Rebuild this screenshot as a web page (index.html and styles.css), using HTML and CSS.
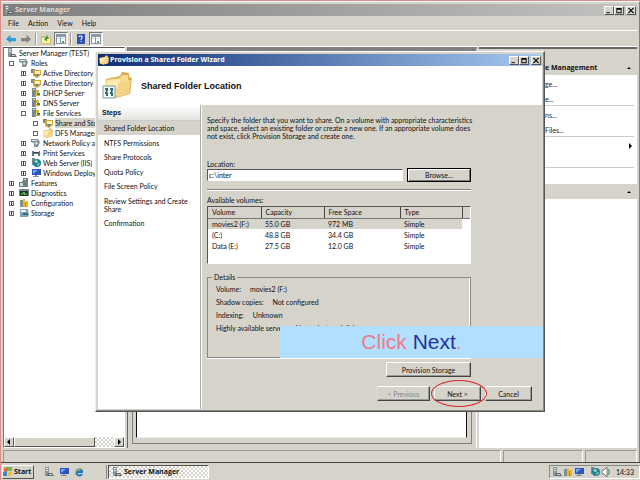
FILE: index.html
```html
<!DOCTYPE html>
<html lang="en">
<head>
<meta charset="utf-8">
<title>Server Manager</title>
<link rel="stylesheet" href="styles.css">
</head>
<body>
<svg class="defs" aria-hidden="true">
  <symbol id="server" viewBox="0 0 10 10"><path fill="#8b989b" d="M1 0h4v9H1z"/><path fill="#dfe7e5" d="M2 1h2v1H2zM2 3h2v1H2z"/><path fill="#59666b" d="M4 6h4l2 3H3z"/><path fill="#cfd7d8" d="M5 7h3v1H5z"/></symbol>
  <symbol id="folder" viewBox="0 0 28 28"><path fill="#d8ab4e" d="M2 8l14-3 2-4 7 1v4l3 1-2 16-14 4L2 24z"/><path fill="#f8dc8c" d="M1 9l15-2 2-3h6l1 18-12 4L3 24z"/><path fill="#ffeab0" d="M3 10l13-2 1 8L4 20z"/><path fill="#f3d486" d="M14 12l13-3-2 14-12 3z"/></symbol>
  <symbol id="roles" viewBox="0 0 10 10"><path fill="#829296" d="M0 1h7l2 3-2 5H3V5L0 4z"/><path fill="#e1eaea" d="M1 2h5v1H1zM5 4l2 1-2 2-1-2z"/></symbol>
  <symbol id="dir" viewBox="0 0 10 10"><path fill="#79878c" d="M0 1h4v4H0z"/><path fill="#d4a62e" d="M2 2h8v5L6 10 2 8z"/><path fill="#fff4bd" d="M4 3h5v3H4z"/><path fill="#5c82a6" d="M4 6h4l-2 3z"/></symbol>
  <symbol id="net" viewBox="0 0 10 10"><path fill="#78868b" d="M1 0h4v9H1z"/><path fill="#dbe4e5" d="M2 1h2v1H2z"/><path fill="#d5b52e" d="M5 2h3v3H5zM4 6h5v2H4z"/><path fill="#388365" d="M6 5h3v2H6z"/></symbol>
  <symbol id="print" viewBox="0 0 10 10"><path fill="#66757b" d="M1 3h8v5H1z"/><path fill="#f4f7f8" d="M3 0h5v4H3zM3 6h4v3H3z"/><path fill="#334b58" d="M2 4h6v1H2z"/></symbol>
  <symbol id="web" viewBox="0 0 10 10"><path fill="#77868a" d="M1 0h3v7H1z"/><circle cx="6" cy="5" r="4" fill="#1c8495"/><path fill="#a5e0c0" d="M3 3l3-1 1 2-2 1zM6 6l3-1-2 3z"/></symbol>
  <symbol id="pc" viewBox="0 0 10 10"><path fill="#3053bb" d="M1 1h9v6H1z"/><path fill="#6caaf1" d="M2 2h5L2 6z"/><path fill="#84949b" d="M4 7h2v1h2v1H2V8h2z"/></symbol>
  <symbol id="feat" viewBox="0 0 10 10"><path fill="#6d8084" d="M4 0h5v9H3V3h1zM0 4h5v5H0z"/><path fill="#d3dcdd" d="M5 1h2v1H5zM1 5h3v3H1z"/></symbol>
  <symbol id="diag" viewBox="0 0 10 10"><path fill="#7c898b" d="M0 1h10v7H0z"/><path fill="#1c3829" d="M1 3h8v5H1z"/><path d="M2 6h2l1-2 1 3 1-1h1" fill="none" stroke="#77df5b"/></symbol>
  <symbol id="config" viewBox="0 0 10 10"><path fill="#809096" d="M1 2h3v7H1zM4 4h5v5H4z"/><path fill="#f0b61b" d="M4 1h2v8H4zM7 3h2v6H7z"/></symbol>
  <symbol id="disk" viewBox="0 0 10 10"><path fill="#87a1ac" d="M1 1h8l1 7-2 1H1z"/><path fill="#eef6f7" d="M2 2h5v2H2z"/><path fill="#187995" d="M4 5h5v2H4z"/></symbol>
  <symbol id="arrow" viewBox="0 0 11 10"><path d="M1 5l4-4v3h5v3H5v2z"/></symbol>
  <symbol id="panel" viewBox="0 0 12 12"><path fill="#8a98a8" d="M1 1h10v10H1z"/><path fill="#fff" d="M2 4h3v6H2zM6 4h4v6H6z"/><path fill="#bac8d8" d="M2 5h2v1H2zM7 5h2v1H7z"/><path fill="#55a34a" d="M7 8h2v2H7z"/></symbol>
  <symbol id="up" viewBox="0 0 6 6"><path d="M1 4l2-2 2 2z"/></symbol>
  <symbol id="right" viewBox="0 0 6 6"><path d="M2 0l3 3-3 3z"/></symbol>
  <symbol id="left" viewBox="0 0 6 6"><path d="M4 0L1 3l3 3z"/></symbol>
  <symbol id="min" viewBox="0 0 8 8"><path d="M1 6h4v1H1z"/></symbol>
  <symbol id="max" viewBox="0 0 8 8"><path d="M1 1h6v6H1V1zm1 2v3h4V3z" fill-rule="evenodd"/></symbol>
  <symbol id="close" viewBox="0 0 8 8"><path d="M1 1l6 6M7 1L1 7" stroke="#000" stroke-width="1.3"/></symbol>
  <symbol id="ie" viewBox="0 0 10 10"><path d="M8 7A3 3 0 1 1 8 4L8 5H3" fill="none" stroke="#1877c9" stroke-width="2"/><path d="M1 8C0 5 7 0 9 2" fill="none" stroke="#e6b93b"/></symbol>
</svg>
<main class="screen">
  <section class="manager">
    <header class="titlebar"><svg class="ic"><use href="#server"/></svg><h1>Server Manager</h1>
      <div class="winbtns"><button aria-label="Minimize"><svg><use href="#min"/></svg></button><button aria-label="Maximize"><svg><use href="#max"/></svg></button><button class="cls" aria-label="Close"><svg><use href="#close"/></svg></button></div>
    </header>
    <nav class="menu"><button>File</button><button>Action</button><button>View</button><button>Help</button></nav>
    <div class="toolbar">
      <button aria-label="Back"><svg fill="#2b9bd3"><use href="#arrow"/></svg></button>
      <button class="fwd" aria-label="Forward"><svg fill="#858585"><use href="#arrow"/></svg></button>
      <i class="sep"></i>
      <button aria-label="Up"><svg viewBox="0 0 12 12"><path fill="#d9c05c" d="M1 3h3l1 1h6v7H1z"/><path fill="#fff6aa" d="M2 5h8v5H2z"/><path fill="#3f9c3c" d="M4 7l3-5 2 4H7v2z"/></svg></button>
      <button class="on" aria-label="Console tree"><svg><use href="#panel"/></svg></button>
      <i class="sep"></i>
      <button aria-label="Help"><svg viewBox="0 0 12 12"><path fill="#3350ae" d="M2 1h8v10H2z"/><path fill="none" stroke="#fff" d="M4 4V3h3v2L6 6v1M6 8v1"/></svg></button>
      <button class="on" aria-label="Action pane"><svg><use href="#panel"/></svg></button>
    </div>
    <div class="work">
      <aside class="treepane">
        <ul class="tree">
          <li><svg class="ic"><use href="#server"/></svg>Server Manager (TEST)</li>
          <li class="l1"><b class="ex minus"></b><svg class="ic"><use href="#roles"/></svg>Roles</li>
          <li class="l2"><b class="ex"></b><svg class="ic"><use href="#dir"/></svg>Active Directory C</li>
          <li class="l2"><b class="ex"></b><svg class="ic"><use href="#dir"/></svg>Active Directory D</li>
          <li class="l2"><b class="ex"></b><svg class="ic"><use href="#net"/></svg>DHCP Server</li>
          <li class="l2"><b class="ex"></b><svg class="ic"><use href="#net"/></svg>DNS Server</li>
          <li class="l2"><b class="ex minus"></b><svg class="ic"><use href="#net"/></svg>File Services</li>
          <li class="l3"><b class="ex minus"></b><svg class="ic"><use href="#dir"/></svg><span class="sel">Share and Sto</span></li>
          <li class="l3"><b class="ex minus"></b><svg class="ic"><use href="#folder"/></svg>DFS Managem</li>
          <li class="l2"><b class="ex"></b><svg class="ic"><use href="#roles"/></svg>Network Policy an</li>
          <li class="l2"><b class="ex"></b><svg class="ic"><use href="#print"/></svg>Print Services</li>
          <li class="l2"><b class="ex"></b><svg class="ic"><use href="#web"/></svg>Web Server (IIS)</li>
          <li class="l2"><b class="ex"></b><svg class="ic"><use href="#pc"/></svg>Windows Deploym</li>
          <li class="l1"><b class="ex"></b><svg class="ic"><use href="#feat"/></svg>Features</li>
          <li class="l1"><b class="ex"></b><svg class="ic"><use href="#diag"/></svg>Diagnostics</li>
          <li class="l1"><b class="ex"></b><svg class="ic"><use href="#config"/></svg>Configuration</li>
          <li class="l1"><b class="ex"></b><svg class="ic"><use href="#disk"/></svg>Storage</li>
        </ul>
        <div class="hscroll"><button aria-label="Scroll left"><svg><use href="#left"/></svg></button><i class="thumb"></i><i class="track"></i><button aria-label="Scroll right"><svg><use href="#right"/></svg></button></div>
      </aside>
      <section class="center"><div class="frame"><div class="sheet"></div></div></section>
      <aside class="actions">
        <h2>e Management<svg><use href="#up"/></svg></h2>
        <div class="group"><a href="#">ge...</a><a href="#">e...</a></div>
        <div class="group"><a href="#">ns...</a><a href="#">Files...</a></div>
        <div class="group"><a href="#"><svg><use href="#right"/></svg></a><a href="#"></a></div>
        <div class="group last"></div>
        <h2><svg><use href="#up"/></svg></h2>
      </aside>
    </div>
    <footer class="status"><i></i><i></i><i></i></footer>
  </section>
  <footer class="taskbar">
    <button class="start"><svg viewBox="0 0 10 10"><path fill="#e56b38" d="M1 1l4-1v4L1 5z"/><path fill="#79b94b" d="M5 0h4v4H5z"/><path fill="#4585c8" d="M0 5l4-1v5H0z"/><path fill="#edc23d" d="M5 5h4L8 9H5z"/></svg>Start</button>
    <div class="quick"><svg><use href="#server"/></svg><svg><use href="#pc"/></svg><svg><use href="#ie"/></svg></div>
    <button class="task"><svg><use href="#server"/></svg>Server Manager</button>
    <div class="tray"><svg><use href="#server"/></svg><svg><use href="#config"/></svg><svg><use href="#pc"/></svg><svg class="far"><use href="#web"/></svg><svg viewBox="0 0 10 10"><path fill="#fff" stroke="#777" d="M1 3h2l3-3v10L3 7H1z"/><path fill="none" stroke="#218c6b" d="M7 2q3 3 0 6"/></svg><time>14:33</time></div>
  </footer>

  <section class="dialog" role="dialog" aria-labelledby="dt">
    <header class="titlebar blue"><svg class="ic"><use href="#folder"/></svg><h1 id="dt">Provision a Shared Folder Wizard</h1>
      <div class="winbtns"><button aria-label="Minimize"><svg><use href="#min"/></svg></button><button aria-label="Maximize"><svg><use href="#max"/></svg></button><button class="cls" aria-label="Close"><svg><use href="#close"/></svg></button></div>
    </header>
    <div class="banner"><svg viewBox="0 0 30 30"><use href="#folder" width="28" height="28" x="2"/><path fill="#eef6f5" stroke="#769d9b" d="M1 15h12v12H1z"/><path fill="#34676b" d="M3 17h3v3H5l1 2v3H4v-2H3v-2h1zM8 17h3v3h-1l1 2v3H9v-2H8v-2h1z"/></svg><h2>Shared Folder Location</h2></div>
    <div class="dbody">
      <nav class="steps"><h3>Steps</h3>
        <ol><li class="cur">Shared Folder Location</li><li>NTFS Permissions</li><li>Share Protocols</li><li>Quota Policy</li><li>File Screen Policy</li><li>Review Settings and Create Share</li><li>Confirmation</li></ol>
      </nav>
      <form class="content">
        <p class="intro">Specify the folder that you want to share. On a volume with appropriate characteristics<br>and space, select an existing folder or create a new one. If an appropriate volume does<br>not exist, click Provision Storage and create one.</p>
        <label for="loc">Location:</label>
        <div class="locrow"><input id="loc" type="text" value="c:\inter"><button type="button" class="btn default">Browse...</button></div>
        <hr>
        <div class="avail">Available volumes:</div>
        <div class="list"><table>
          <colgroup><col class="c1"><col class="c2"><col class="c3"><col class="c4"><col></colgroup>
          <thead><tr><th>Volume</th><th>Capacity</th><th>Free Space</th><th>Type</th><th></th></tr></thead>
          <tbody>
            <tr class="cur"><td>movies2 (F:)</td><td>55.0 GB</td><td>972 MB</td><td>Simple</td><td class="blank"></td></tr>
            <tr><td>(C:)</td><td>48.8 GB</td><td>34.4 GB</td><td>Simple</td><td></td></tr>
            <tr><td>Data (E:)</td><td>27.5 GB</td><td>12.0 GB</td><td>Simple</td><td></td></tr>
          </tbody></table></div>
        <fieldset><legend>Details</legend>
          <p>Volume:<span>movies2 (F:)</span></p><p>Shadow copies:<span>Not configured</span></p><p>Indexing:<span>Unknown</span></p><p>Highly available server:<span>Not a clustered disk</span></p>
        </fieldset>
        <div class="prow"><button type="button" class="btn prov">Provision Storage</button></div>
        <div class="nav"><button type="button" class="btn prev" disabled>&lt; Previous</button><button type="button" class="btn next">Next &gt;<span class="ring"></span></button><button type="button" class="btn">Cancel</button></div>
      </form>
    </div>
    <div class="callout">Click <b>Next</b>.</div>
  </section>
</main>
</body>
</html>
```
FILE: styles.css
```css
* { box-sizing: border-box; }
:root { --face: #d6d3cb; --dark: #808080; }
body { margin: 0; color: #111; font: 7px/8px Lato, "Liberation Sans", sans-serif; }
h1, h2, h3, p, ul, ol { margin: 0; padding: 0; list-style: none; }
button, input { font: inherit; color: inherit; margin: 0; padding: 0; border: 0; background: none; border-radius: 0; }
svg { display: block; flex: none; }
.defs { position: absolute; width: 0; height: 0; }
.screen { position: relative; display: flex; flex-direction: column; height: 100vh; overflow: hidden; border: solid #e08a8c; border-width: 1px 0 0 1px; background: var(--face); }
.manager { flex: 1; min-height: 0; display: flex; flex-direction: column; padding: 2px 2px 0; border-top: 1px solid #fff; border-right: 1px solid var(--dark); }

.titlebar { flex: none; display: flex; align-items: center; height: 12px; padding-left: 1px; gap: 1px; background: linear-gradient(90deg, #7d7d7d, #c3c3c1); color: #dedbd3; }
.titlebar h1 { flex: 1; font: bold 7px/10px "Open Sans", sans-serif; }
.titlebar.blue { background: linear-gradient(90deg, #0f2d75, #a6caf0); color: #fff; }
.ic { width: 10px; height: 10px; }
.winbtns { display: flex; padding-right: 1px; }
.winbtns button { width: 10px; height: 9px; background: var(--face); border: 1px solid; border-color: #fff #555 #555 #fff; }
.winbtns svg { width: 8px; height: 7px; }
.winbtns .cls { margin-left: 2px; }

.menu { display: flex; flex: none; height: 15px; padding: 0 5px; gap: 9px; border-bottom: 1px solid #fff; }
.toolbar { display: flex; flex: none; align-items: center; height: 16px; padding-left: 1px; gap: 1px; border-bottom: 1px solid #fff; }
.toolbar button { width: 14px; height: 14px; padding: 1px; }
.toolbar svg { width: 12px; height: 12px; }
.toolbar .fwd { transform: scaleX(-1); }
.toolbar .on { border: 1px solid; border-color: #777 #fff #fff #777; background: #edebe6; padding: 0; }
.sep { width: 2px; height: 12px; margin: 0 1px; border-left: 1px solid #999; border-right: 1px solid #fff; }

.work { flex: 1; min-height: 0; display: grid; grid-template-columns: 122px 1fr 158px; gap: 2px; }
.treepane { display: flex; flex-direction: column; min-width: 0; min-height: 0; overflow: hidden; background: #fff; border: 1px solid; border-color: #555 #fff #fff #777; }
.tree { flex: 1; }
.tree li { display: flex; align-items: center; height: 10px; gap: 2px; padding-left: 3px; white-space: nowrap; }
.tree .l1 { padding-left: 5px; }
.tree .l2 { padding-left: 17px; }
.tree .l3 { padding-left: 29px; }
.l1 .ic, .l2 .ic, .l3 .ic { margin-left: 3px; }
.ex { width: 5px; height: 5px; border: 1px solid #666; background: linear-gradient(#333, #333) 50% 50% / 1px 100% no-repeat; flex: none; }
.ex.minus { background: none; }
.sel { background: var(--face); line-height: 10px; }
.hscroll { display: flex; height: 10px; }
.hscroll button { width: 10px; background: var(--face); border: 1px solid; border-color: #fff #555 #555 #fff; }
.hscroll svg { width: 8px; height: 6px; }
.thumb { flex: 1; background: var(--face); border: 1px solid; border-color: #fff #555 #555 #fff; }
.track, .task { background: repeating-conic-gradient(#fff 0 25%, #d4d1c9 0 50%) 0 0 / 4px 4px; }
.track { width: 19px; }

.center { background: var(--face); border-top: 5px solid var(--dark); border-left: 1px solid #666; padding: 4px; display: flex; border-right: 1px solid #fff; }
.frame { flex: 1; display: flex; padding: 0 4px 5px 3px; border: 1px solid var(--dark); border-top: 0; }
.sheet { flex: 1; background: #fff; border: solid #111; border-width: 0 1px 1px; border-bottom-color: #eee; }
.actions { min-width: 0; padding-top: 11px; background: linear-gradient(var(--face) 11px, #fff 0); border-top: 2px solid #666; }
.actions h2 { display: flex; align-items: center; height: 15px; padding: 0 5px 0 66px; background: var(--face); font: bold 7px/8px "Open Sans", sans-serif; }
.actions h2 svg { margin-left: auto; }
.actions svg { width: 6px; height: 6px; }
.group { height: 31px; margin-right: 3px; border-bottom: 1px solid #ccc; }
.group.last { height: 16px; border: 0; }
.group a { display: flex; align-items: center; height: 15px; padding: 2px 0 0 66px; color: #20203c; text-decoration: none; }
.group svg { margin-left: auto; margin-right: 1px; }

.status { flex: none; display: grid; grid-template-columns: 1fr 80px 52px; gap: 2px; height: 12px; margin-top: 2px; }
.status i { border: solid #999; border-width: 1px 0 0 1px; border-right: 1px solid #fff; }

.taskbar { flex: none; display: flex; align-items: stretch; height: 18px; padding: 2px 0 1px 1px; border-top: 1px solid #444; }
.taskbar svg { width: 10px; height: 10px; }
.start { display: flex; align-items: center; gap: 1px; width: 32px; font: bold 7px/10px "Open Sans", sans-serif; border: 1px solid; border-color: #fff #555 #555 #fff; }
.quick { display: flex; align-items: center; gap: 5px; width: 73px; padding-left: 10px; border-right: 1px solid #888; }
.task { display: flex; align-items: center; gap: 2px; width: 101px; margin-left: 1px; padding-left: 3px; font: bold 7px/10px "Open Sans", sans-serif; border: 1px solid; border-color: #555 #fff #fff #555; }
.tray { display: flex; align-items: center; gap: 1px; margin-left: auto; padding: 0 5px 0 2px; border: 1px solid; border-color: #888 #fff #fff #888; }
.tray .far { margin-left: 5px; }
.tray time { margin-left: 4px; }

.dialog { position: absolute; left: 94px; top: 50px; width: 450px; height: 361px; display: flex; flex-direction: column; padding: 2px; background: var(--face); border: 1px solid; border-color: #fff #555 #555 #eee; box-shadow: inset -1px -1px #888; }
.banner { flex: none; display: flex; align-items: center; gap: 9px; height: 39px; padding-left: 4px; background: #fff; }
.banner svg { width: 30px; height: 30px; }
.banner h2 { font: bold 9px/12px "Liberation Sans", sans-serif; }
.dbody { flex: 1; min-height: 0; display: grid; grid-template-columns: 103px 1fr; }
.steps { background: #fff; border-right: 1px solid #aaa; }
.steps h3 { height: 16px; padding: 4px; font: bold 7px/8px "Liberation Sans", sans-serif; background: linear-gradient(#fff, #e3e3df); border-bottom: 1px solid #ccc; }
.steps ol { display: flex; flex-direction: column; justify-content: space-between; height: 109px; }
.steps li { padding: 3px 8px 3px 6px; }
.steps .cur { background: var(--face); }
.content { padding: 11px 0 0 5px; border-left: 1px solid #fff; min-width: 0; }
.intro { height: 44px; white-space: nowrap; }
label { display: block; height: 8px; }
.locrow { display: flex; align-items: center; gap: 4px; width: 264px; height: 14px; }
.locrow input { flex: 1; min-width: 0; height: 12px; padding: 0 1px; background: #fff; border: 1px solid; border-color: #555 #fff #fff #555; }
.btn { position: relative; width: 47px; height: 15px; background: var(--face); border: 1px solid; border-color: #fff #444 #444 #fff; box-shadow: inset -1px -1px #999; }
.locrow .btn { width: 64px; height: 14px; border: 1px solid #000; box-shadow: inset 1px 1px #fff, inset -1px -1px #777; }
hr { width: 264px; height: 2px; margin: 7px 0 5px; border: 0; border-top: 1px solid var(--dark); border-bottom: 1px solid #fff; }
.avail { height: 10px; }
.list { width: 264px; height: 58px; background: #fff; border: 1px solid; border-color: #555 #fff #fff #555; }
table { width: 100%; border-collapse: collapse; table-layout: fixed; }
.c1 { width: 53px; } .c2 { width: 63px; } .c3 { width: 76px; } .c4 { width: 62px; }
th, td { padding: 0 0 0 4px; height: 11px; text-align: left; font-weight: normal; }
th { background: var(--face); border-right: 1px solid #444; border-bottom: 1px solid #777; }
th:last-child { border-right: 0; }
.cur td { background: var(--face); }
.cur .blank { background: #fff; }
fieldset { width: 264px; height: 85px; margin: 9px 0 0; padding: 4px 8px; border: 1px solid #888; box-shadow: inset -1px 0 #fff, 0 1px #fff; }
legend { margin-left: -4px; padding: 0 2px; }
fieldset p { height: 12px; margin-bottom: 1px; }
fieldset span { margin-left: 9px; }
.prow { width: 264px; margin-top: 4px; text-align: right; }
.btn.prov { width: 85px; }
.nav { display: flex; justify-content: flex-end; gap: 4px; margin-top: 9px; padding-right: 10px; }
.btn.prev { width: 53px; color: #888; border-left-color: #ddd; }
.btn.next { z-index: 1; }
.ring { position: absolute; left: -4px; top: -7px; width: 56px; height: 27px; border: 1px solid #dc2529; border-radius: 50%; }
.callout { position: absolute; left: 184px; right: 1px; top: 274px; height: 32px; background: #b0dfff; color: #f07b86; font: 21px/32px "Liberation Sans", sans-serif; text-align: center; }
.callout b { color: #263199; font-weight: normal; }
```
